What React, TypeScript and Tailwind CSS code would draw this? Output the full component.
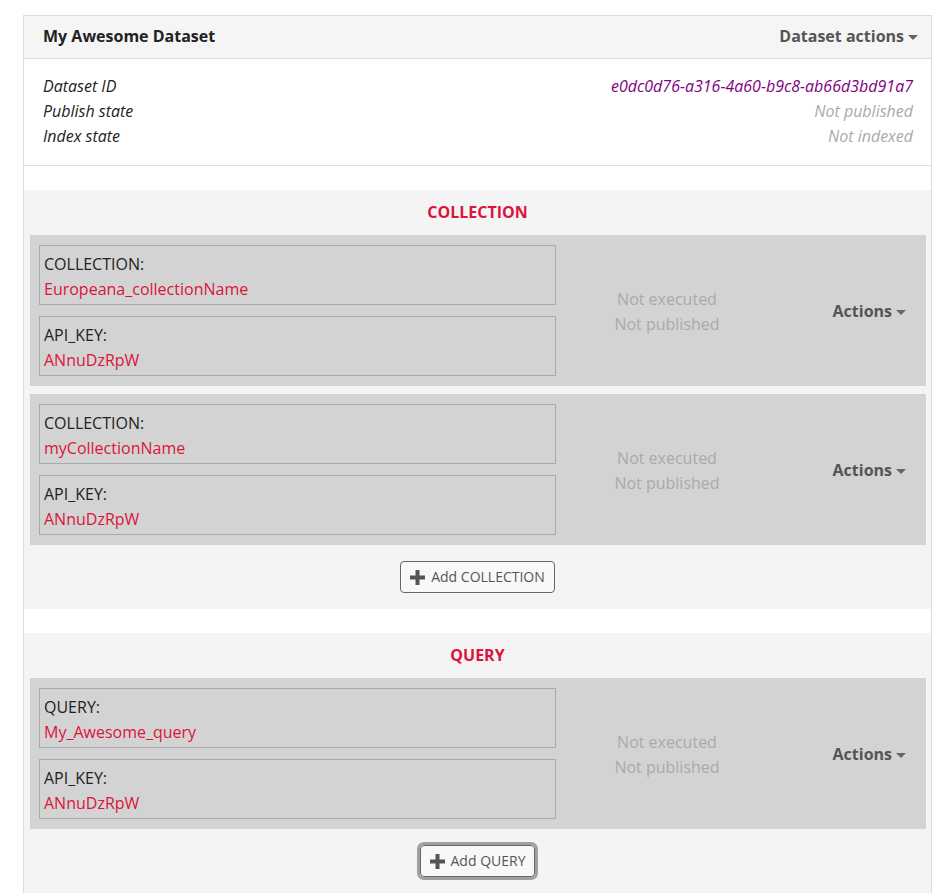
type Field = { label: string; value: string };
type Item = { fields: Field[] };

const collections: Item[] = [
  {
    fields: [
      { label: "COLLECTION:", value: "Europeana_collectionName" },
      { label: "API_KEY:", value: "ANnuDzRpW" },
    ],
  },
  {
    fields: [
      { label: "COLLECTION:", value: "myCollectionName" },
      { label: "API_KEY:", value: "ANnuDzRpW" },
    ],
  },
];

const queries: Item[] = [
  {
    fields: [
      { label: "QUERY:", value: "My_Awesome_query" },
      { label: "API_KEY:", value: "ANnuDzRpW" },
    ],
  },
];

const Caret = () => (
  <span className="ml-1 inline-block h-0 w-0 border-x-[5px] border-t-[5px] border-x-transparent border-t-[#666] align-middle" />
);

const PlusIcon = () => (
  <svg width="15" height="15" viewBox="0 0 15 15" className="shrink-0">
    <path d="M5.5 0h4v5.5H15v4H9.5V15h-4V9.5H0v-4h5.5z" fill="#555" />
  </svg>
);

const ItemRow = ({ item }: { item: Item }) => (
  <div className="flex bg-[#d3d3d3]">
    <div className="flex w-[526px] flex-col gap-[11px] py-[10px] pl-[9px]">
      {item.fields.map((f) => (
        <div key={f.label} className="border border-[#a9a9a9] px-1 pt-[6px] pb-[2px] leading-[25px]">
          <div className="text-[#222]">{f.label}</div>
          <div className="text-[#dc143c]">{f.value}</div>
        </div>
      ))}
    </div>
    <div className="flex w-[222px] flex-col items-center justify-center pt-[2px] leading-[25px] text-[#aaa]">
      <div>Not executed</div>
      <div>Not published</div>
    </div>
    <div className="flex flex-1 items-center justify-end pr-5">
      <span className="font-bold text-[#555]">
        Actions
        <Caret />
      </span>
    </div>
  </div>
);

const Section = ({
  title,
  items,
  button,
  focused,
}: {
  title: string;
  items: Item[];
  button: string;
  focused?: boolean;
}) => (
  <div className="bg-[#f4f4f4] pb-[16px]">
    <h3 className="pt-[9px] pb-[10px] text-center font-bold leading-[26px] text-[#dc143c]">{title}</h3>
    <div className="flex flex-col gap-2 pl-[6px] pr-[5px]">
      {items.map((item, i) => (
        <ItemRow key={i} item={item} />
      ))}
    </div>
    <div className="flex justify-center pt-[16px]">
      <button
        className={
          focused
            ? "flex items-center gap-[6px] rounded border border-[#666] bg-[#f8f8f8] px-[9px] py-[3px] text-[#555] outline-[3px] outline-[#a0a0a0]"
            : "flex items-center gap-[6px] rounded border border-[#666] bg-[#f8f8f8] px-[9px] py-[3px] text-[#555]"
        }
      >
        <PlusIcon />
        <span className="text-sm leading-[24px]">{button}</span>
      </button>
    </div>
  </div>
);

export default function App() {
  return (
    <div className="min-h-[896px] bg-white pt-[15px] font-['Open_Sans',sans-serif] text-[16px] text-[#222]">
      <div className="ml-[23px] w-[909px] border border-b-0 border-[#ddd]">
        <div className="flex h-[43px] items-center justify-between border-b border-[#ddd] bg-[#f5f5f5] pb-[2px] pl-[19px] pr-[13px]">
          <h2 className="font-bold text-[#222]">My Awesome Dataset</h2>
          <span className="font-bold text-[#555]">
            Dataset actions
            <Caret />
          </span>
        </div>
        <div className="flex justify-between border-b border-[#ddd] pt-[15px] pb-[16px] pl-[19px] pr-[18px] italic leading-[25px]">
          <div>
            <div>Dataset ID</div>
            <div>Publish state</div>
            <div>Index state</div>
          </div>
          <div className="text-right">
            <div className="text-[#800080]">e0dc0d76-a316-4a60-b9c8-ab66d3bd91a7</div>
            <div className="text-[#aaa]">Not published</div>
            <div className="text-[#aaa]">Not indexed</div>
          </div>
        </div>
        <div className="flex flex-col gap-6 pt-6">
          <Section title="COLLECTION" items={collections} button="Add COLLECTION" />
          <Section title="QUERY" items={queries} button="Add QUERY" focused />
        </div>
      </div>
    </div>
  );
}
